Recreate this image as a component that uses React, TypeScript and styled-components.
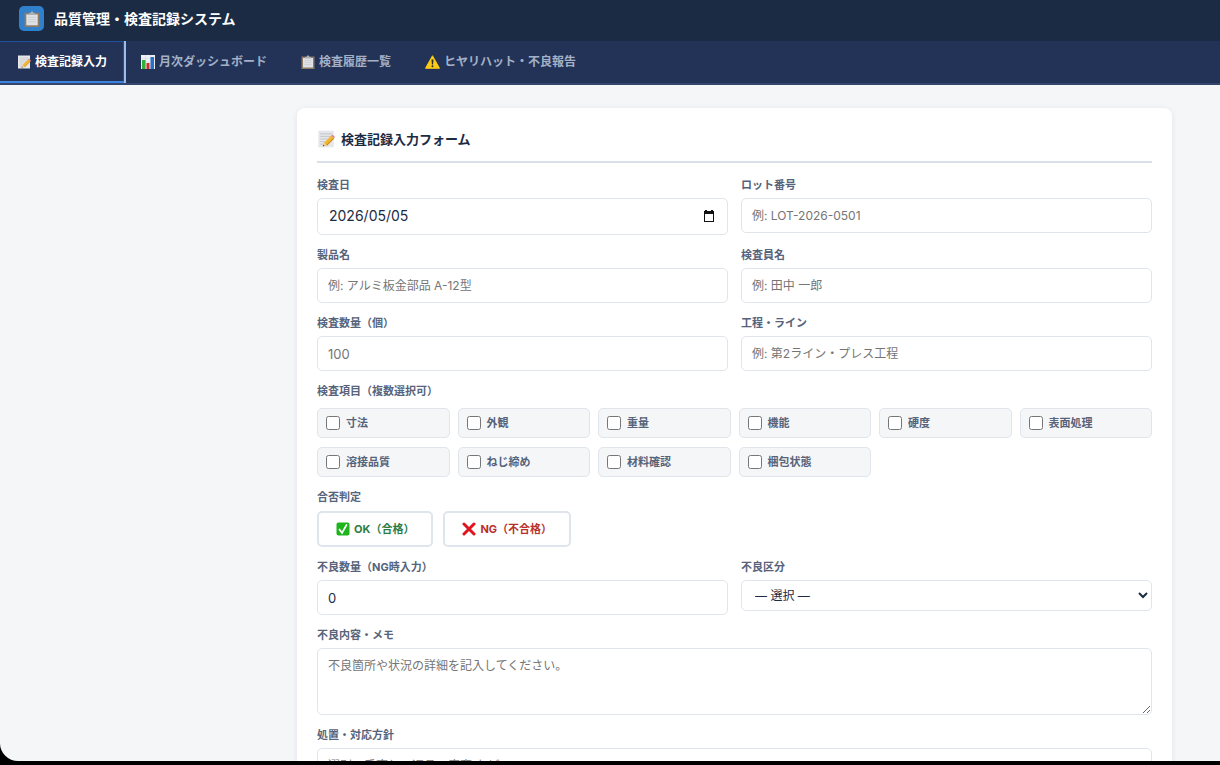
import React from "react";
import styled, { createGlobalStyle, css } from "styled-components";

const Global = createGlobalStyle`
  *, *::before, *::after { box-sizing: border-box; }
  html, body { margin: 0; background: #000; }
  body, button, input, select, textarea {
    font-family: Inter, "Noto Sans CJK JP", sans-serif;
  }
`;

const Window = styled.div`
  height: calc(100vh - 4px);
  overflow-y: auto;
  scrollbar-width: none;
  background: #f4f6f8;
  border-bottom-left-radius: 18px;
`;

const Header = styled.header`
  display: flex;
  align-items: center;
  gap: 10px;
  height: 41px;
  padding: 0 19px 4px;
  background: #1b2b44;
`;

const Logo = styled.span`
  display: flex;
  align-items: center;
  justify-content: center;
  width: 25px;
  height: 25px;
  border-radius: 5px;
  background: #3180cb;
`;

const AppTitle = styled.h1`
  margin: 0;
  font-size: 14px;
  line-height: 20px;
  font-weight: 700;
  color: #fff;
`;

const Nav = styled.nav`
  display: flex;
  height: 44px;
  background: #233357;
  border-bottom: 2px solid #33456c;
`;

const Tab = styled.button<{ $active?: boolean }>`
  display: flex;
  align-items: center;
  gap: 4px;
  padding: 0 17px;
  border: 0;
  background: transparent;
  font-size: 12px;
  line-height: 18px;
  font-weight: 700;
  color: #a3b0c6;
  cursor: pointer;
  ${(p) =>
    p.$active &&
    css`
      color: #fff;
      border-top: 1px solid #20509c;
      border-bottom: 2px solid #3b82dc;
      box-shadow: inset -1px 0 0 #20509c, 2px 0 0 #9dbcee;
    `}
`;

const Main = styled.main`
  padding: 23px 48px 24px 297px;
`;

const Card = styled.form`
  display: flex;
  flex-direction: column;
  gap: 13px;
  padding: 20px;
  border-radius: 8px;
  background: #fff;
  box-shadow: 0 1px 6px rgba(27, 43, 68, 0.08);
`;

const CardTitle = styled.h2`
  display: flex;
  align-items: center;
  gap: 6px;
  margin: 0 0 2px;
  padding-bottom: 11px;
  border-bottom: 2px solid #d9e0e9;
  font-size: 13px;
  line-height: 22px;
  font-weight: 700;
  color: #1b2b44;
`;

const Grid = styled.div`
  display: grid;
  grid-template-columns: 1fr 1fr;
  gap: 13px;
  align-items: start;
`;

const Field = styled.div`
  display: flex;
  flex-direction: column;
  gap: 5px;
`;

const labelText = css`
  font-size: 11px;
  line-height: 15px;
  font-weight: 700;
  color: #56637a;
`;

const Label = styled.label`
  ${labelText}
`;

const Group = styled.fieldset<{ $gap: number }>`
  min-width: 0;
  margin: 0;
  padding: 0;
  border: 0;
  & > legend {
    ${labelText}
    padding: 0;
    margin-bottom: ${(p) => p.$gap}px;
  }
`;

const control = css`
  width: 100%;
  border: 1px solid #e0e5ec;
  border-radius: 5px;
  background: #fff;
  color: #1b2b44;
  font-size: 12px;
  line-height: 18px;
  outline: none;
  &::placeholder { color: #757575; opacity: 1; }
`;

const Input = styled.input`
  ${control}
  height: 35px;
  padding: 0 10px;
  &[inputmode="numeric"] { font-size: 13px; }
`;

const DateBox = styled.div`
  ${control}
  display: flex;
  align-items: center;
  height: 37px;
  padding: 0 12px 1px 11px;
`;

const DateInput = styled.input`
  flex: 1;
  min-width: 0;
  padding: 0;
  border: 0;
  outline: none;
  background: transparent;
  color: #1b2b44;
  font-size: 14px;
  line-height: 20px;
`;

const PickerButton = styled.button`
  display: flex;
  padding: 0;
  border: 0;
  background: transparent;
  cursor: pointer;
`;

const Select = styled.select`
  ${control}
  height: 31px;
  padding: 0 0 0 9px;
`;

const Textarea = styled.textarea`
  ${control}
  display: block;
  height: 67px;
  padding: 8px 10px;
  resize: vertical;
`;

const Checks = styled.div`
  display: grid;
  grid-template-columns: repeat(auto-fill, minmax(120px, 1fr));
  gap: 9px 8px;
`;

const Check = styled.label`
  ${labelText}
  display: flex;
  align-items: center;
  gap: 6px;
  height: 30px;
  padding: 0 8px;
  border: 1px solid #e0e5ec;
  border-radius: 5px;
  background: #f4f6f8;
  cursor: pointer;
  & > input { width: 14px; height: 14px; margin: 0; }
`;

const Verdicts = styled.div`
  display: flex;
  gap: 10px;
`;

const Verdict = styled.button<{ $color: string }>`
  display: flex;
  align-items: center;
  gap: 4px;
  height: 36px;
  padding: 0 17px;
  border: 2px solid #dfe5ed;
  border-radius: 5px;
  background: #fff;
  font-size: 11px;
  line-height: 15px;
  font-weight: 700;
  color: ${(p) => p.$color};
  cursor: pointer;
`;

const Memo = ({ size = 14 }: { size?: number }) => (
  <svg width={size} height={size} viewBox="0 0 28 28" aria-hidden="true">
    <path d="M2 1h24v26H2z" fill="#e6e7ea" />
    <path d="M5 6h18M5 10h18M5 14h14M5 18h7M5 22h5" stroke="#bfc3ca" strokeWidth="1.4" />
    <path d="M9 25l2-5L22 9l4 4-11 11z" fill="#f5b62e" />
    <path d="M15 24L26 13" fill="none" stroke="#c98715" strokeWidth="1.6" />
    <path d="M22 9l2-2 4 4-2 2z" fill="#e8808a" />
    <path d="M9 25.500l2-5.500 4 4z" fill="#f0d3a2" />
    <path d="M9 25.500l1-2.600 1.800 1.700z" fill="#333" />
  </svg>
);

const Clipboard = ({ size = 14 }: { size?: number }) => (
  <svg width={size} height={size} viewBox="0 0 28 28" aria-hidden="true">
    <path d="M1 3h26v25H1z" fill="#8d7b66" />
    <path d="M4 6h20v19H4z" fill="#dfe1e4" />
    <path d="M7 11h14M7 15h14M7 19h14" stroke="#c8ccd1" strokeWidth="1.4" />
    <path d="M8 7V4h3l1.500-3h3L17 4h3v3z" fill="#a9b0b8" />
  </svg>
);

const Chart = () => (
  <svg width="14" height="14" viewBox="0 0 28 28" aria-hidden="true">
    <path d="M0 0h28v28H0z" fill="#eef1f4" />
    <path d="M0 7h28M0 14h28M0 21h28M9 0v28M19 0v28" stroke="#c8d0d8" strokeWidth="1" />
    <path d="M2 10h7v18H2z" fill="#2fae3b" />
    <path d="M11 16h6v12h-6z" fill="#d52b2b" />
    <path d="M19 4h7v24h-7z" fill="#2c6fc9" />
  </svg>
);

const Warning = () => (
  <svg width="15" height="14" viewBox="0 0 30 28" aria-hidden="true">
    <path d="M15 1.500L29 26.500H1z" fill="#fccb16" stroke="#fccb16" strokeWidth="2" strokeLinejoin="round" />
    <path d="M13 9h4l-.8 10h-2.400z" fill="#2b2b2b" />
    <circle cx="15" cy="22.500" r="2" fill="#2b2b2b" />
  </svg>
);

const CheckMark = () => (
  <svg width="14" height="14" viewBox="0 0 28 28" aria-hidden="true">
    <rect x="1" y="1" width="26" height="26" rx="4" fill="#1eb41c" />
    <path d="M7 15l5 7L21 6" fill="none" stroke="#fff" strokeWidth="3.400" strokeLinecap="round" />
  </svg>
);

const CrossMark = () => (
  <svg width="14" height="14" viewBox="0 0 28 28" aria-hidden="true">
    <path d="M4 4l20 20M24 4L4 24" stroke="#e0141c" strokeWidth="6" strokeLinecap="round" />
  </svg>
);

const Calendar = () => (
  <svg width="12" height="12" viewBox="0 0 12 12" aria-hidden="true">
    <path d="M1 1h1V0h2v1h4V0h2v1h1v11H1zM2 4v7h8V4z" fill="#111" fillRule="evenodd" />
  </svg>
);

const items = ["寸法", "外観", "重量", "機能", "硬度", "表面処理", "溶接品質", "ねじ締め", "材料確認", "梱包状態"];

export default function App() {
  return (
    <>
      <Global />
      <Window lang="ja">
        <Header>
          <Logo><Clipboard size={16} /></Logo>
          <AppTitle>品質管理・検査記録システム</AppTitle>
        </Header>
        <Nav>
          <Tab type="button" $active aria-current="page"><Memo />検査記録入力</Tab>
          <Tab type="button"><Chart />月次ダッシュボード</Tab>
          <Tab type="button"><Clipboard />検査履歴一覧</Tab>
          <Tab type="button"><Warning />ヒヤリハット・不良報告</Tab>
        </Nav>
        <Main>
          <Card>
            <CardTitle><Memo size={18} />検査記録入力フォーム</CardTitle>
            <Grid>
              <Field>
                <Label htmlFor="date">検査日</Label>
                <DateBox>
                  <DateInput id="date" defaultValue="2026/05/05" />
                  <PickerButton type="button" aria-label="カレンダー"><Calendar /></PickerButton>
                </DateBox>
              </Field>
              <Field>
                <Label htmlFor="lot">ロット番号</Label>
                <Input id="lot" placeholder="例: LOT-2026-0501" />
              </Field>
              <Field>
                <Label htmlFor="product">製品名</Label>
                <Input id="product" placeholder="例: アルミ板金部品 A-12型" />
              </Field>
              <Field>
                <Label htmlFor="inspector">検査員名</Label>
                <Input id="inspector" placeholder="例: 田中 一郎" />
              </Field>
              <Field>
                <Label htmlFor="qty">検査数量（個）</Label>
                <Input id="qty" type="number" inputMode="numeric" placeholder="100" />
              </Field>
              <Field>
                <Label htmlFor="line">工程・ライン</Label>
                <Input id="line" placeholder="例: 第2ライン・プレス工程" />
              </Field>
            </Grid>
            <Group $gap={9}>
              <legend>検査項目（複数選択可）</legend>
              <Checks>
                {items.map((item) => (
                  <Check key={item}><input type="checkbox" />{item}</Check>
                ))}
              </Checks>
            </Group>
            <Group $gap={6}>
              <legend>合否判定</legend>
              <Verdicts>
                <Verdict type="button" $color="#2a7d46"><CheckMark />OK（合格）</Verdict>
                <Verdict type="button" $color="#b9302b"><CrossMark />NG（不合格）</Verdict>
              </Verdicts>
            </Group>
            <Grid>
              <Field>
                <Label htmlFor="ngqty">不良数量（NG時入力）</Label>
                <Input id="ngqty" type="number" inputMode="numeric" defaultValue="0" />
              </Field>
              <Field>
                <Label htmlFor="kind">不良区分</Label>
                <Select id="kind"><option>— 選択 —</option></Select>
              </Field>
            </Grid>
            <Field>
              <Label htmlFor="memo">不良内容・メモ</Label>
              <Textarea id="memo" placeholder="不良箇所や状況の詳細を記入してください。" />
            </Field>
            <Field>
              <Label htmlFor="action">処置・対応方針</Label>
              <Input id="action" placeholder="選別・手直し・返品・廃棄 など" />
            </Field>
          </Card>
        </Main>
      </Window>
    </>
  );
}
